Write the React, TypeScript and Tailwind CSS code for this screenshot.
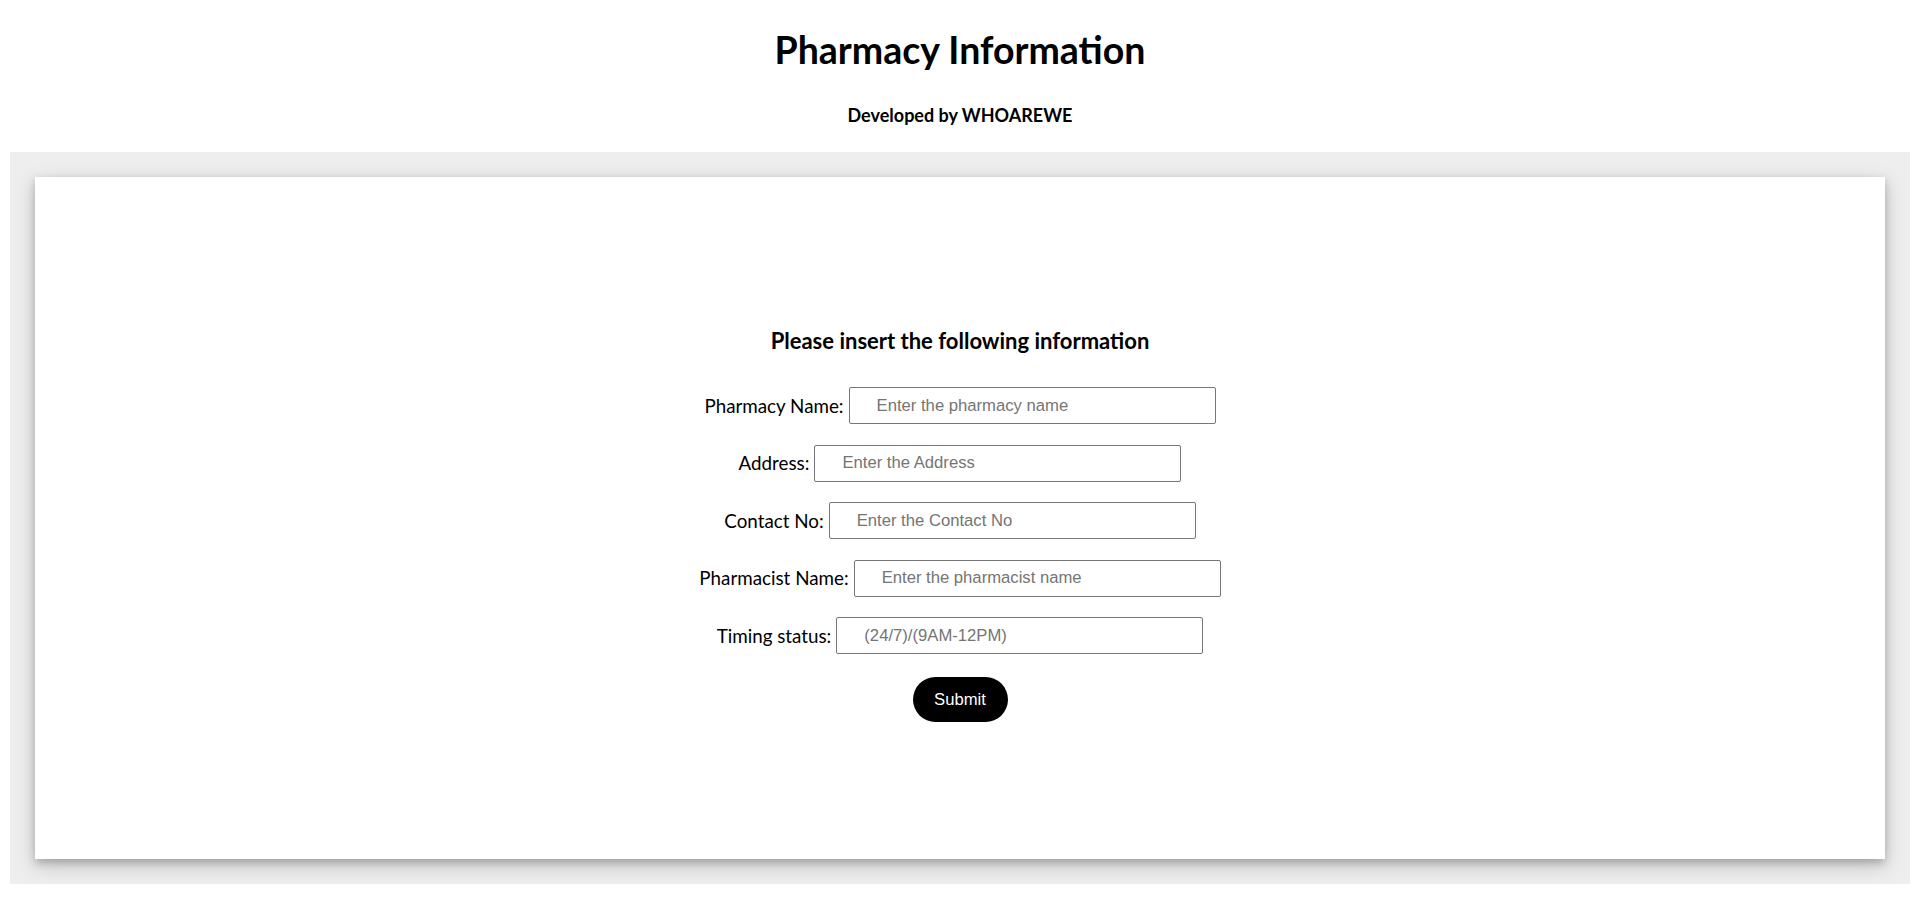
import React from "react";

const fields = [
  { label: "Pharmacy Name:", placeholder: "Enter the pharmacy name" },
  { label: "Address:", placeholder: "Enter the Address" },
  { label: "Contact No:", placeholder: "Enter the Contact No" },
  { label: "Pharmacist Name:", placeholder: "Enter the pharmacist name" },
  { label: "Timing status:", placeholder: "(24/7)/(9AM-12PM)" },
];

function FieldRow({ label, placeholder }: { label: string; placeholder: string }) {
  return (
    <div className="flex items-center justify-center gap-[5px]">
      <label className="text-[18.8px] leading-[22px] text-black">{label}</label>
      <input
        type="text"
        placeholder={placeholder}
        className="h-[37px] w-[367px] rounded-[2px] border border-[#767676] bg-white pl-[27px] font-['Liberation_Sans',Arial,sans-serif] text-[16.67px] text-black outline-none placeholder:text-[#757575]"
      />
    </div>
  );
}

export default function App() {
  return (
    <div className="min-h-screen bg-white font-['Lato','Open_Sans',sans-serif] text-black">
      <header className="flex flex-col items-center pt-[27px]">
        <h1 className="text-[37.5px] font-bold leading-[45px]">Pharmacy Information</h1>
        <h4 className="mt-[32px] text-[18px] font-bold leading-[22px]">Developed by WHOAREWE</h4>
      </header>

      <div className="mt-[26px] px-[10px]">
        <section className="bg-[#eeeeee] px-[25px] pb-[25px] pt-[25px]">
          <div className="bg-white pb-[137px] pt-[151px] shadow-[0_4px_8px_0_rgba(0,0,0,0.2),0_6px_20px_0_rgba(0,0,0,0.19)]">
            <form className="flex flex-col items-center" onSubmit={(e) => e.preventDefault()}>
              <h3 className="text-[22px] font-bold leading-[26px]">
                Please insert the following information
              </h3>
              <div className="mt-[33px] flex flex-col gap-[20.5px]">
                {fields.map((f) => (
                  <FieldRow key={f.label} label={f.label} placeholder={f.placeholder} />
                ))}
              </div>
              <button
                type="submit"
                className="mt-[23px] h-[45px] w-[95px] rounded-full bg-black font-['Liberation_Sans',Arial,sans-serif] text-[16.67px] text-white"
              >
                Submit
              </button>
            </form>
          </div>
        </section>
      </div>
    </div>
  );
}
